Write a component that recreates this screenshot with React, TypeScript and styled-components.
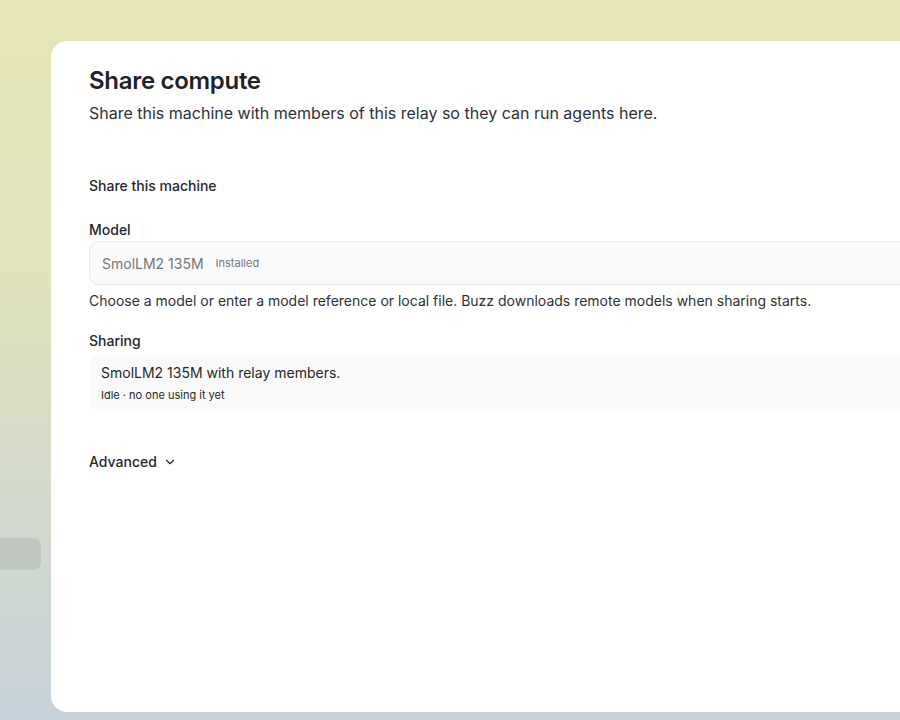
import React from "react";
import styled, { createGlobalStyle } from "styled-components";
import { ChevronDown } from "lucide-react";

const GlobalStyle = createGlobalStyle`
  html, body {
    margin: 0;
    height: 100%;
    overflow: hidden;
  }
  body {
    font-family: Inter, "Noto Sans", sans-serif;
    color: #27272a;
    -webkit-font-smoothing: antialiased;
  }
`;

const Shell = styled.div`
  display: flex;
  width: 900px;
  height: 720px;
  overflow: hidden;
  background: linear-gradient(180deg, #e6e5b6 0%, #dfe2bd 40%, #c6d1da 100%);
`;

const Sidebar = styled.aside`
  flex: 0 0 51px;
  display: flex;
  flex-direction: column;
  padding-top: 538px;
`;

const SidebarItem = styled.div`
  width: 41px;
  height: 32px;
  border-radius: 0 8px 8px 0;
  background: rgba(160, 170, 165, 0.35);
`;

const Card = styled.main`
  flex: 0 0 1000px;
  margin: 41px 0 8px;
  background: #ffffff;
  border-radius: 16px;
  padding: 24px 38px;
  box-sizing: border-box;
`;

const Title = styled.h1`
  margin: 0;
  font-size: 24px;
  line-height: 32px;
  font-weight: 600;
  letter-spacing: -0.3px;
  color: #1f2226;
`;

const Subtitle = styled.p`
  margin: 4px 0 0;
  font-size: 16px;
  line-height: 24px;
  color: #2e3136;
`;

const SectionTitle = styled.h2`
  margin: 51px 0 0;
  font-size: 14px;
  line-height: 20px;
  font-weight: 500;
  color: #27272a;
`;

const Field = styled.div<{ $gap: number }>`
  margin-top: ${(p) => p.$gap}px;
  display: flex;
  flex-direction: column;
`;

const Label = styled.label`
  font-size: 14px;
  line-height: 20px;
  font-weight: 500;
  color: #27272a;
  margin-bottom: 1px;
`;

const Input = styled.div`
  height: 44px;
  box-sizing: border-box;
  border: 1px solid #e8e8e8;
  border-radius: 10px;
  background: #fafafa;
  display: flex;
  align-items: center;
  gap: 12px;
  padding: 0 12px;
`;

const InputValue = styled.span`
  font-size: 14px;
  color: #75777c;
`;

const Badge = styled.span`
  font-size: 11px;
  color: #75777c;
`;

const Help = styled.p`
  margin: 6px 0 0;
  font-size: 14px;
  line-height: 20px;
  color: #2e3136;
`;

const StatusBox = styled.div`
  margin-top: 3px;
  border-radius: 10px;
  background: #fafafa;
  padding: 8px 12px 8px;
  display: flex;
  flex-direction: column;
  gap: 4px;
`;

const StatusMain = styled.span`
  font-size: 14px;
  line-height: 20px;
  color: #27272a;
`;

const StatusSub = styled.span`
  font-size: 11px;
  line-height: 16px;
  color: #27272a;
`;

const AdvancedToggle = styled.button`
  margin-top: 41px;
  padding: 0;
  border: none;
  background: none;
  font-family: inherit;
  font-size: 14px;
  line-height: 20px;
  font-weight: 500;
  color: #27272a;
  display: flex;
  align-items: center;
  gap: 6px;
  cursor: pointer;
`;

const App = () => {
  return (
    <>
      <GlobalStyle />
      <Shell>
        <Sidebar>
          <SidebarItem />
        </Sidebar>
        <Card>
          <Title>Share compute</Title>
          <Subtitle>
            Share this machine with members of this relay so they can run agents here.
          </Subtitle>

          <SectionTitle>Share this machine</SectionTitle>

          <Field $gap={24}>
            <Label>Model</Label>
            <Input>
              <InputValue>SmolLM2 135M</InputValue>
              <Badge>Installed</Badge>
            </Input>
            <Help>
              Choose a model or enter a model reference or local file. Buzz downloads remote
              models when sharing starts.
            </Help>
          </Field>

          <Field $gap={20}>
            <Label>Sharing</Label>
            <StatusBox>
              <StatusMain>SmolLM2 135M with relay members.</StatusMain>
              <StatusSub>Idle · no one using it yet</StatusSub>
            </StatusBox>
          </Field>

          <AdvancedToggle>
            Advanced
            <ChevronDown size={14} strokeWidth={2} />
          </AdvancedToggle>
        </Card>
      </Shell>
    </>
  );
};

export default App;
